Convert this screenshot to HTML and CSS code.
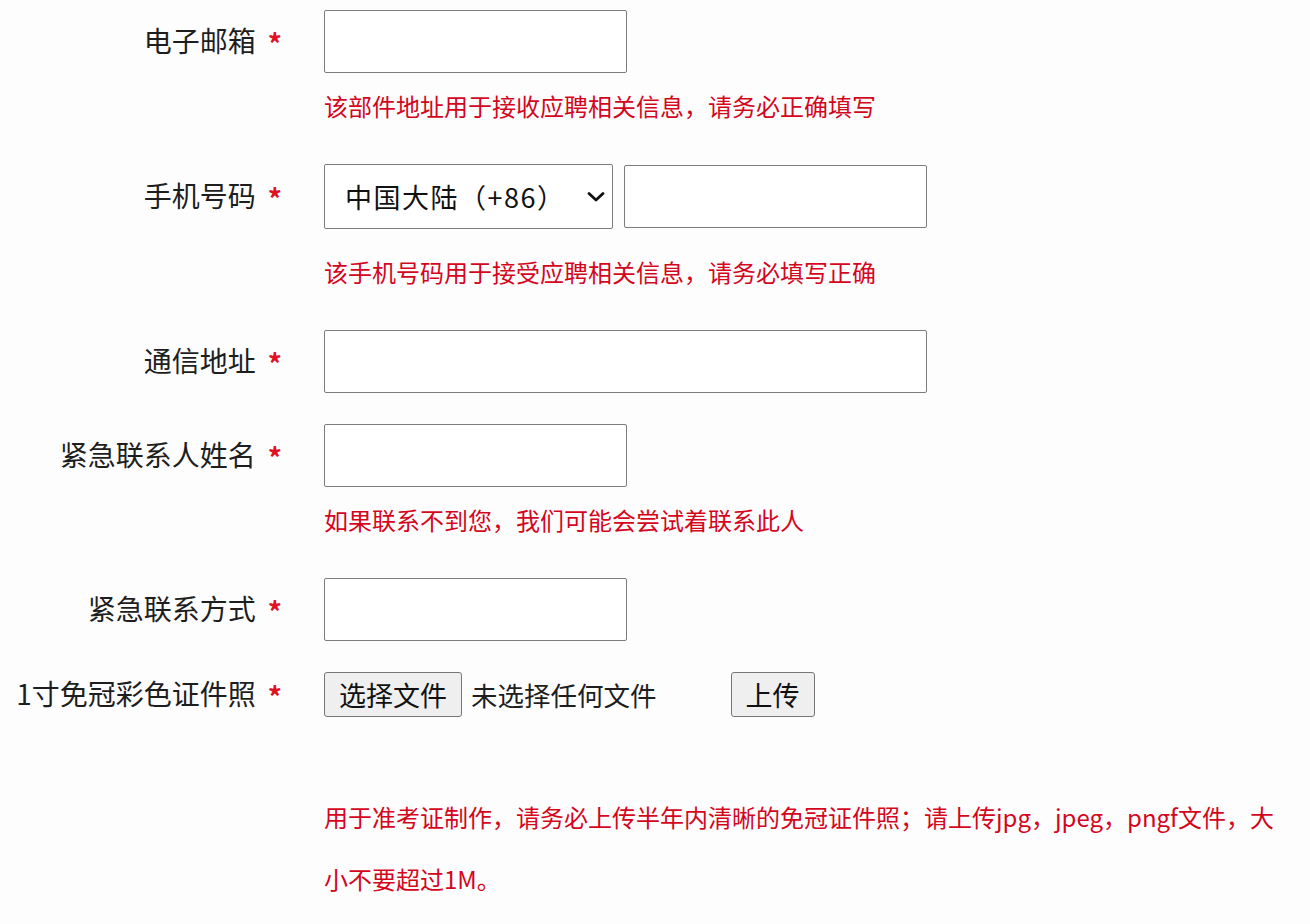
FILE: index.html
```html
<!DOCTYPE html>
<html lang="zh-CN">
<head>
    <meta charset="UTF-8">
    <meta name="viewport" content="width=device-width, initial-scale=1.0">
    <title>报名信息</title>
    <link rel="stylesheet" href="styles.css">
</head>
<body>
    <form class="apply_form">
        <div class="field">
            <label class="label">电子邮箱<span class="star">*</span></label>
            <div class="control">
                <input type="text" class="text_input short">
            </div>
            <p class="hint">该部件地址用于接收应聘相关信息，请务必正确填写</p>
        </div>

        <div class="field">
            <label class="label">手机号码<span class="star">*</span></label>
            <div class="control phone">
                <div class="select_wrap">
                    <select class="area_select">
                        <option>中国大陆（+86）</option>
                    </select>
                    <svg class="chevron" width="20" height="12" viewBox="0 0 20 12">
                        <path d="M3 2.5 L10 9 L17 2.5" fill="none" stroke="#111" stroke-width="2.8" stroke-linecap="round" stroke-linejoin="round"/>
                    </svg>
                </div>
                <input type="text" class="text_input short phone_input">
            </div>
            <p class="hint hint_low">该手机号码用于接受应聘相关信息，请务必填写正确</p>
        </div>

        <div class="field">
            <label class="label">通信地址<span class="star">*</span></label>
            <div class="control">
                <input type="text" class="text_input long">
            </div>
        </div>

        <div class="field">
            <label class="label">紧急联系人姓名<span class="star">*</span></label>
            <div class="control">
                <input type="text" class="text_input short">
            </div>
            <p class="hint">如果联系不到您，我们可能会尝试着联系此人</p>
        </div>

        <div class="field">
            <label class="label">紧急联系方式<span class="star">*</span></label>
            <div class="control">
                <input type="text" class="text_input short">
            </div>
        </div>

        <div class="field">
            <label class="label">1寸免冠彩色证件照<span class="star">*</span></label>
            <div class="control upload">
                <button type="button" class="btn">选择文件</button>
                <span class="file_name">未选择任何文件</span>
                <button type="button" class="btn upload_btn">上传</button>
            </div>
            <p class="hint hint_photo">用于准考证制作，请务必上传半年内清晰的免冠证件照；请上传jpg，jpeg，pngf文件，大小不要超过1M。</p>
        </div>
    </form>
</body>
</html>
```

FILE: styles.css
```css
html, body {
    margin: 0;
    padding: 0;
    height: 100%;
    overflow: hidden;
    background: #fdfdfe;
    font-family: "Noto Sans CJK SC", "Noto Sans", sans-serif;
    color: #1e1e1e;
}

.apply_form {
    padding-top: 10px;
}

.field {
    display: grid;
    grid-template-columns: 282px 1fr;
    column-gap: 42px;
    align-items: center;
    margin-bottom: 31px;
}

.label {
    text-align: right;
    font-size: 28px;
    white-space: nowrap;
}

.star {
    color: #e0101e;
    font-weight: 700;
    margin-left: 12px;
    vertical-align: -3px;
}

.control {
    display: flex;
    align-items: center;
}

.text_input {
    box-sizing: border-box;
    height: 63px;
    border: 1px solid #7c7c7c;
    border-radius: 2px;
    background: #fff;
    padding: 0 12px;
    font-size: 24px;
    font-family: inherit;
}

.short {
    width: 303px;
}

.long {
    width: 603px;
}

.select_wrap {
    position: relative;
}

.area_select {
    box-sizing: border-box;
    appearance: none;
    -webkit-appearance: none;
    width: 289px;
    height: 65px;
    border: 1px solid #7c7c7c;
    border-radius: 2px;
    background: #fff;
    padding: 0 0 0 20px;
    font-size: 27px;
    letter-spacing: 1.5px;
    font-family: inherit;
    color: #111;
}

.chevron {
    position: absolute;
    right: 7px;
    top: 27px;
    pointer-events: none;
}

.phone_input {
    margin-left: 11px;
}

.hint {
    grid-column: 2;
    margin: 11px 0 5px;
    line-height: 44px;
    font-size: 24px;
    color: #d4061c;
}

.hint_low {
    margin-top: 21px;
}

.upload {
    height: 45px;
}

.btn {
    box-sizing: border-box;
    height: 45px;
    padding: 0 14px;
    border: 1px solid #767676;
    border-radius: 3px;
    background: #efefef;
    font-size: 27px;
    font-family: inherit;
    color: #111;
}

.file_name {
    margin-left: 9px;
    font-size: 26.5px;
}

.upload_btn {
    margin-left: 74px;
}

.hint_photo {
    margin-top: 69px;
    max-width: 962px;
    line-height: 62px;
}
```
